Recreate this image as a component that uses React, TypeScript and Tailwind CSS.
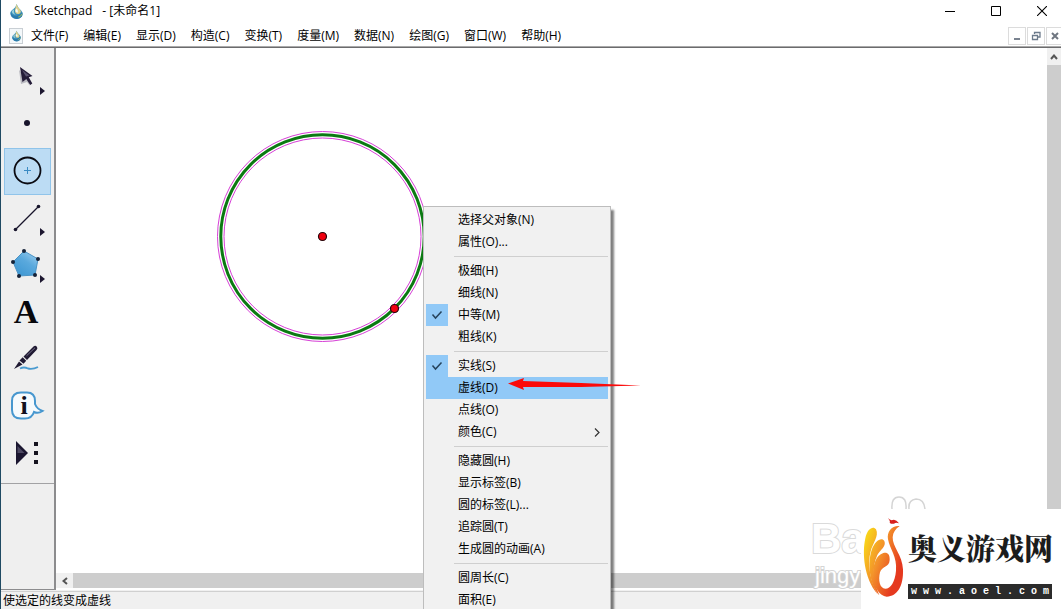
import React from "react";

const menus = ["文件(F)", "编辑(E)", "显示(D)", "构造(C)", "变换(T)", "度量(M)", "数据(N)", "绘图(G)", "窗口(W)", "帮助(H)"];

type Entry = { label: string; checked?: boolean; active?: boolean; submenu?: boolean };

const groups: Entry[][] = [
  [{ label: "选择父对象(N)" }, { label: "属性(O)..." }],
  [{ label: "极细(H)" }, { label: "细线(N)" }, { label: "中等(M)", checked: true }, { label: "粗线(K)" }],
  [
    { label: "实线(S)", checked: true },
    { label: "虚线(D)", active: true },
    { label: "点线(O)" },
    { label: "颜色(C)", submenu: true },
  ],
  [
    { label: "隐藏圆(H)" },
    { label: "显示标签(B)" },
    { label: "圆的标签(L)..." },
    { label: "追踪圆(T)" },
    { label: "生成圆的动画(A)" },
  ],
  [{ label: "圆周长(C)" }, { label: "面积(E)" }],
];

const Flyout = () => <path d="M36 33 L41 37 L36 41 Z" fill="#1d1730" />;

const tools: { name: string; art: React.ReactNode; selected?: boolean }[] = [
  {
    name: "选择箭头",
    art: (
      <>
        <path d="M15 16 L17 30 L23 28 L26 32 L24 25 Z" fill="#b9b9c0" />
        <path d="M16 13 L28.5 22 L24.8 23.3 L28.3 29.5 L26.2 31 L22.3 25 L18.5 28 Z" fill="#241c38" />
        <path d="M18 16 L25.5 21.6 L22 22.5 Z" fill="#5a5470" />
        <Flyout />
      </>
    ),
  },
  { name: "点", art: <circle cx="23" cy="22" r="3" fill="#17142b" /> },
  {
    name: "圆",
    selected: true,
    art: (
      <>
        <circle cx="23.5" cy="22.5" r="13" fill="none" stroke="#0b0b12" strokeWidth="1.8" />
        <path d="M23.5 19 V26 M20 22.5 H27" stroke="#3a8bc4" />
      </>
    ),
  },
  {
    name: "线段",
    art: (
      <>
        <path d="M11.5 34.5 L34.5 11.5" stroke="#17142b" strokeWidth="1.3" />
        <circle cx="11.5" cy="34.5" r="1.8" fill="#17142b" />
        <circle cx="34.5" cy="11.5" r="1.8" fill="#17142b" />
        <Flyout />
      </>
    ),
  },
  {
    name: "多边形",
    art: (
      <>
        <defs>
          <linearGradient id="poly" x1="1" y1="0" x2="0.3" y2="1">
            <stop offset="0" stopColor="#a5d3f1" />
            <stop offset="0.5" stopColor="#5aa9dd" />
            <stop offset="1" stopColor="#3f98d3" />
          </linearGradient>
        </defs>
        <path d="M20 9 L34 17 L31 33 L15 34 L9 20 Z" fill="url(#poly)" stroke="#4a93c5" />
        {[[20, 9], [34, 17], [31, 33], [15, 34], [9, 20]].map(([x, y]) => (
          <circle key={x} cx={x} cy={y} r="2" fill="#152238" />
        ))}
        <Flyout />
      </>
    ),
  },
  {
    name: "文本",
    art: (
      <text x="22" y="34" textAnchor="middle" fontSize="34" fontWeight="700" fontFamily="Liberation Serif, serif" fill="#08080c">
        A
      </text>
    ),
  },
  {
    name: "标记",
    art: (
      <>
        <path d="M16 32.5 Q20 30.5 24 32.5 Q29 33.5 34 31" fill="none" stroke="#4a9bd0" strokeWidth="1.8" />
        <path d="M29.5 10.5 Q31.5 9 33 11 Q34 12.5 32.5 14 L23 24 L19.5 20.5 Z" fill="#201a33" />
        <path d="M18.7 21.3 L22.2 24.8 L19.5 27.8 L15.5 24.5 Z" fill="#201a33" />
        <path d="M15 25.5 L18.5 28.5 L10 33 Z" fill="#201a33" />
        <path d="M22.5 19.8 L31 11.8" stroke="#75708a" />
      </>
    ),
  },
  {
    name: "信息",
    art: (
      <>
        <path
          d="M17 9.5 H23 Q31 9.5 31 18 V21 Q33 26 38.5 28 Q34 31 30 29 Q28 35.5 21 35.5 H17 Q8 35.5 8 27 V18 Q8 9.5 17 9.5 Z"
          fill="#f6fafd"
          stroke="#4797cf"
          strokeWidth="2"
        />
        <text x="20" y="31" textAnchor="middle" fontSize="26" fontWeight="700" fontFamily="Liberation Serif, serif" fill="#121020">
          i
        </text>
      </>
    ),
  },
  {
    name: "自定义工具",
    art: (
      <>
        <path d="M12 11 L24 23 L12 35 Z" fill="#1b1630" />
        <path d="M13.5 16 L20.5 23 H13.5 Z" fill="#4d4862" />
        <path d="M30 12 h4 v4 h-4 Z M30 21 h4 v4 h-4 Z M30 30 h4 v4 h-4 Z" fill="#15131f" />
      </>
    ),
  },
];

function Drop({ small }: { small?: boolean }) {
  return (
    <svg viewBox="0 0 16 18" className={small ? "h-[12px] w-[11px]" : "h-[17px] w-[15px]"} aria-hidden="true">
      <path d="M8 1 Q9.5 5 13 8 Q15.5 11 13.5 14.5 Q11 17.5 7.5 17 Q2.5 16.5 1.5 12 Q1 8.5 5 6 Q7.5 4 8 1 Z" fill="#3d93bd" />
      <path d="M8 1 Q9.5 5 12 7.5 Q13.5 10 11 11.5 Q7.5 12.5 6.5 9.5 Q6 7 7 5 Z" fill="#dfd38d" />
      <path d="M8 5.5 Q10.5 8 9.5 10 Q7 10.5 7 8 Z" fill="#f5fafa" />
      <path d="M2 9 Q2.5 14 8 13.5 Q12 13 14 9.5 Q15.5 13 12.5 15.5 Q9 18 5 16 Q1 13.5 2 9 Z" fill="#2b7bad" />
      <path d="M3 8.5 Q3 12 7 12.5 Q4.5 10.5 5.5 6.5 Z" fill="#9bd0d8" />
      <path d="M10 15 Q13 14 13.8 11.5" fill="none" stroke="#8fb76b" strokeWidth="1.2" />
    </svg>
  );
}

function TitleBar() {
  return (
    <header className="flex h-[22px] items-center bg-white pl-2 pr-[14px]">
      <Drop />
      <h1 className="flex gap-[10px] pl-[10px]">
        <span>Sketchpad</span>
        <span>- [未命名1]</span>
      </h1>
      <div className="ml-auto flex gap-9">
        <button aria-label="最小化">
          <svg className="block h-[10px] w-[10px]"><path d="M0 5.5 H10" stroke="#000" /></svg>
        </button>
        <button aria-label="最大化">
          <svg className="block h-[10px] w-[10px]"><path d="M.5 .5 H9.5 V9.5 H.5 Z" fill="none" stroke="#000" /></svg>
        </button>
        <button aria-label="关闭">
          <svg className="block h-[10px] w-[10px]"><path d="M0 0 L10 10 M10 0 L0 10" stroke="#000" strokeWidth="1.1" /></svg>
        </button>
      </div>
    </header>
  );
}

function MenuBar() {
  const box = "flex h-[18px] w-[18px] items-center justify-center border border-[#dcdcdc] bg-white";
  return (
    <nav className="flex h-[26px] items-center border-b border-[#6b6b6d] bg-white pl-2 pt-[3px] shadow-[inset_0_-1px_0_#a9a9a9]">
      <span className="flex h-4 w-[14px] items-center justify-center border border-[#c9cfd4] bg-[#f4f8fa]">
        <Drop small />
      </span>
      <div className="flex gap-[15px] whitespace-nowrap pl-2">
        {menus.map((m) => (
          <button key={m}>{m}</button>
        ))}
      </div>
      <div className="-mr-[3px] ml-auto flex gap-px">
        <button aria-label="最小化文档" className={box}>
          <svg className="h-[10px] w-[10px]"><path d="M2 8 H8" stroke="#7a8390" strokeWidth="2" /></svg>
        </button>
        <button aria-label="还原文档" className={box}>
          <svg className="h-[10px] w-[10px]">
            <path d="M3.5 3 V1.5 H9 V6 H7 M3 1.5 H9.5 M1.5 4.5 H6.5 V8.5 H1.5 Z M1 4.5 H7" fill="none" stroke="#6c7a8b" strokeWidth="1.3" />
          </svg>
        </button>
        <button aria-label="关闭文档" className={box}>
          <svg className="h-[10px] w-[10px]"><path d="M2 2 L8 8 M8 2 L2 8" stroke="#6f7680" strokeWidth="2" /></svg>
        </button>
      </div>
    </nav>
  );
}

function Toolbar() {
  return (
    <aside className="flex w-[55px] shrink-0 flex-col border-b border-r-2 border-[#8c8c8e] bg-[#efefef] pt-[6px]">
      <div className="border-b border-[#a2a2a4] pb-[6px] pl-[3px]">
        {tools.map((t) => (
          <button
            key={t.name}
            aria-label={t.name}
            aria-pressed={!!t.selected}
            className={
              t.selected
                ? "block h-[47px] w-[47px] bg-[#bcdcf4] outline-1 -outline-offset-1 outline-[#90c4ea]"
                : "block h-[47px] w-[47px]"
            }
          >
            <svg viewBox="0 0 47 47" className="block h-[47px] w-[47px]">{t.art}</svg>
          </button>
        ))}
      </div>
    </aside>
  );
}

function Sketch() {
  return (
    <svg className="absolute left-[160px] top-[82px] h-[214px] w-[214px]" viewBox="216 130 214 214" role="img" aria-label="圆">
      <g fill="none">
        <circle cx="322.5" cy="236.5" r="105" stroke="#d63fd6" />
        <circle cx="322.5" cy="236.5" r="101.7" stroke="#0b7a12" strokeWidth="3" />
        <circle cx="322.5" cy="236.5" r="98.5" stroke="#d63fd6" />
      </g>
      <circle cx="322.5" cy="236.5" r="4" fill="#f0000f" stroke="#26060a" strokeWidth="1.2" />
      <circle cx="394.5" cy="308.5" r="4" fill="#f0000f" stroke="#26060a" strokeWidth="1.2" />
    </svg>
  );
}

function ContextMenu() {
  return (
    <div
      role="menu"
      className="absolute left-[422px] top-[206px] w-[188px] border border-[#bdbdbd] bg-[#f1f1f1] p-[2px] shadow-[3px_4px_2px_rgba(0,0,0,0.5)]"
    >
      {groups.map((group, i) => (
        <div key={i}>
          {i > 0 && <hr className="my-[3px] ml-7 border-t border-[#cfcfcf]" />}
          {group.map((e) => (
            <button
              key={e.label}
              role="menuitem"
              className={e.active ? "flex h-[22px] w-full items-center bg-[#91c9f7]" : "flex h-[22px] w-full items-center"}
            >
              <span
                className={
                  e.checked
                    ? "flex h-full w-[22px] items-center justify-center bg-[#91c9f7]"
                    : "h-full w-[22px]"
                }
              >
                {e.checked && (
                  <svg className="h-[10px] w-[12px]"><path d="M1.5 4.5 L4.5 8 L10.5 1.5" fill="none" stroke="#26435c" strokeWidth="1.5" /></svg>
                )}
              </span>
              <span className="pl-[10px]">{e.label}</span>
              {e.submenu && (
                <svg className="ml-auto mr-2 h-[9px] w-[6px]"><path d="M1 .5 L5 4.5 L1 8.5" fill="none" stroke="#333" strokeWidth="1.2" /></svg>
              )}
            </button>
          ))}
        </div>
      ))}
    </div>
  );
}

function Pointer() {
  return (
    <svg className="absolute left-[505px] top-[376px] h-[16px] w-[136px]" aria-hidden="true">
      <path d="M2 7.5 L18 2 L17 5 L75 7 L135 9.5 L75 11 L17 11 L18 14 Z" fill="#fb0a0a" />
    </svg>
  );
}

function BaiduMark() {
  return (
    <div className="absolute bottom-[18px] right-0 h-[98px] w-[250px] overflow-hidden whitespace-nowrap font-['Liberation_Sans',sans-serif]">
      <svg className="absolute left-[80px] top-0 h-[20px] w-[36px]" aria-hidden="true">
        <path d="M1 16 Q0 4 8 4 Q16 4 15 16 M18 16 Q17 7 25 6 Q33 6 34 16" fill="none" stroke="#d4d4d4" strokeWidth="1.5" />
      </svg>
      <div className="flex flex-col pt-[21px]">
        <span className="text-[42px] font-bold leading-[49px] text-white [-webkit-text-stroke:2px_#dadada] [paint-order:stroke_fill]">Ba</span>
        <span className="pl-1 text-[22px] leading-[26px] text-white [-webkit-text-stroke:2px_#d4d4d4] [paint-order:stroke_fill]">jingy</span>
      </div>
    </div>
  );
}

function SiteBadge() {
  return (
    <div className="absolute bottom-0 right-0 flex h-[100px] w-[200px] bg-white">
      <svg viewBox="213 87 141 300" className="h-[100px] w-[47px] shrink-0" aria-hidden="true">
        <defs>
          <linearGradient id="flame" gradientUnits="userSpaceOnUse" x1="220" y1="200" x2="335" y2="240">
            <stop offset="0" stopColor="#f8d21a" />
            <stop offset="0.45" stopColor="#f3922a" />
            <stop offset="1" stopColor="#e5391f" />
          </linearGradient>
        </defs>
        <g fill="url(#flame)">
          <path d="M258 148 C250 137 232 145 226 175 C216 220 222 295 262 342 C240 300 232 250 242 214 C248 190 268 168 258 148 Z" />
          <path d="M283 183 C275 170 255 182 245 210 C232 248 238 315 268 346 C250 302 245 262 262 225 C270 210 290 200 283 183 Z" />
          <path d="M329 138 C305 136 290 155 294 178 C299 207 322 230 318 272 C315 305 302 326 286 326 C269 326 264 300 270 277 C276 258 298 262 299 240 C300 223 292 216 280 219 C258 225 246 258 250 292 C254 325 268 347 290 350 C322 350 341 318 339 268 C337 225 307 200 308 172 C309 157 316 147 329 138 Z" />
        </g>
        <path d="M294 114 Q300 122 308 120 Q318 117 327 130 Q318 126 312 131 Q304 133 299 128 Q302 125 294 114 Z" fill="#d8201c" />
      </svg>
      <div className="flex w-[144px] flex-col justify-end pb-[10px]">
        <p className="whitespace-nowrap pb-3 font-['Noto_Serif_CJK_SC','Noto_Sans_CJK_SC',serif] text-[29px] font-black leading-[48px] text-[#1c1c1c]">
          奥义游戏网
        </p>
        <p className="h-[15px] whitespace-pre bg-[#2b2b2b] text-center font-['Liberation_Mono',monospace] text-[10px] font-bold leading-[15px] text-white">
          w w w . a o e l . c o m
        </p>
      </div>
    </div>
  );
}

export default function App() {
  return (
    <div className="relative flex h-screen flex-col overflow-hidden border-l border-[#1f4a63] bg-[#f0f0f0] font-['Open_Sans','Noto_Sans_CJK_SC',sans-serif] text-[12px] leading-4 text-black">
      <TitleBar />
      <MenuBar />
      <div className="flex min-h-0 flex-1">
        <Toolbar />
        <main className="flex min-w-0 flex-1 flex-col bg-white">
          <div className="flex min-h-0 flex-1">
            <div className="relative min-w-0 flex-1">
              <Sketch />
            </div>
            <div className="flex w-[14px] flex-col bg-[#cdcdcd]">
              <button aria-label="向上滚动" className="flex h-[17px] items-center justify-center bg-[#f0f0f0]">
                <svg className="h-[6px] w-[8px]"><path d="M1 5 L4 1.5 L7 5" fill="none" stroke="#555" strokeWidth="2" /></svg>
              </button>
            </div>
          </div>
          <div className="flex h-[17px] border-b-2 border-white bg-[#cdcdcd]">
            <button aria-label="向左滚动" className="flex w-[17px] items-center justify-center bg-[#f0f0f0]">
              <svg className="h-[8px] w-[6px]"><path d="M5 1 L1.5 4 L5 7" fill="none" stroke="#555" strokeWidth="2" /></svg>
            </button>
          </div>
        </main>
      </div>
      <footer className="mt-px h-[18px] border-t border-[#d0d0d0] pl-[2px] pt-px">使选定的线变成虚线</footer>
      <BaiduMark />
      <ContextMenu />
      <Pointer />
      <SiteBadge />
    </div>
  );
}
